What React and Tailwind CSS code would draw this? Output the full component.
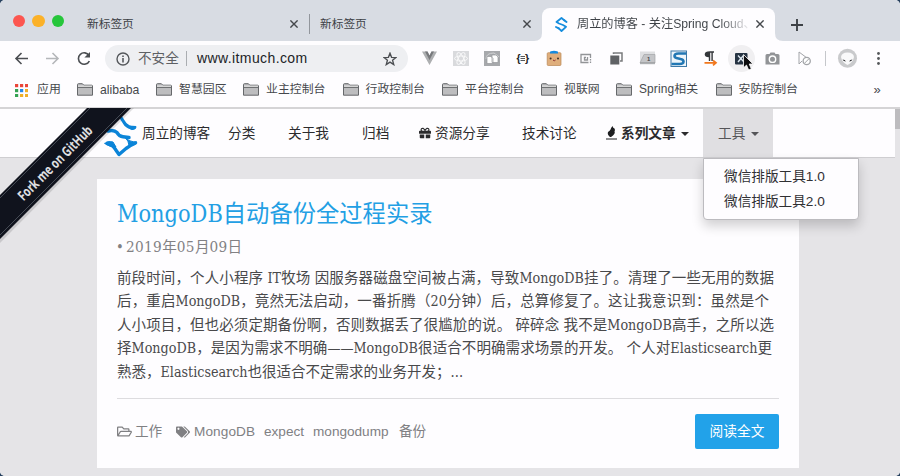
import React from "react";
import { FaGift, FaTags, FaRegFolderOpen } from "react-icons/fa";

const UI = "font-['Liberation_Sans','Noto_Sans_CJK_SC',sans-serif]";

function SiteMark() {
  return (
    <svg className="h-[48px] w-[36px] shrink-0" viewBox="103 109 36 48" fill="none" stroke="#0b84d8" strokeLinecap="round" strokeLinejoin="round">
      <path d="M120 116 Q123 121 125.500 124.500 Q129 128 134 127.500" strokeWidth="3.200" />
      <path d="M129 127.500 Q133 125.500 136 126.500 Q136 130 131.500 129.500 Z" fill="#0b84d8" strokeWidth="1" />
      <path d="M108 131 Q114 129.500 117 132.500 Q119 136.500 123 136.800 L129 137.500" strokeWidth="3.400" />
      <path d="M107 143.500 Q113 144.500 115.500 149.500 L119 154.500 L126 148.500 Q131 145 135.500 143" strokeWidth="3.400" />
      <path d="M105 143.500 Q107 140.500 113 142 L116 147 Q109 147 105 143.500 Z" fill="#0b84d8" strokeWidth="1" />
      <path d="M125 137.500 Q129 142 137 142 L135 144.500 L129 145.500 L128 141.500 Z" fill="#0b84d8" strokeWidth="1" />
    </svg>
  );
}

function TabLogo() {
  return (
    <svg className="h-[15px] w-[13px] shrink-0" viewBox="0 0 13 15" fill="none" stroke="#158ddd" strokeWidth="1.800" strokeLinejoin="round" strokeLinecap="round">
      <path d="M9.500 3.500 L6.500 1 L1.500 5 L4 6.500 L8 8 L11 9.800 L6.500 14 L3.500 11.200" />
      <path d="M9.300 3.300 L11.500 5M1 10 L3.700 11.400" strokeWidth="1.900" />
    </svg>
  );
}

function Close() {
  return (
    <svg className="h-2 w-2 shrink-0" viewBox="0 0 8 8" stroke="#45484c" strokeWidth="1.4">
      <path d="M.4 .4 7.6 7.6M7.6 .4 .4 7.6" />
    </svg>
  );
}

function Folder() {
  return (
    <svg className="h-[13px] w-4 shrink-0" viewBox="0 0 16 13" fill="#bdbdbf" stroke="#66686b" strokeWidth="1">
      <path d="M.5 12.2V1.6Q.5.7 1.4.7H5.4L6.8 2.2H14.6Q15.5 2.2 15.5 3V12.2Z" />
      <path d="M1 3.2H15" stroke="#f4f4f5" />
      <path d="M.5 4.4H15.5" />
    </svg>
  );
}

function Tabs() {
  return (
    <div className="flex h-[41px] bg-[#d8dce3] text-[11.7px] text-[#3d4146]">
      <div className="flex w-[87px] shrink-0 gap-[7px] pl-[12.5px] pt-[14.5px]">
        <span className="h-[12.5px] w-[12.5px] rounded-full bg-[#fc5650]" />
        <span className="h-[12.5px] w-[12.5px] rounded-full bg-[#fbb128]" />
        <span className="h-[12.5px] w-[12.5px] rounded-full bg-[#26c63b]" />
      </div>
      <div className="flex w-[222px] items-center pt-[7px]">
        <span className="w-[203px]">新标签页</span>
        <Close />
      </div>
      <div className="flex w-[223px] items-center pt-[7px]">
        <span className="mr-[10px] h-5 w-px bg-[#92969c]" />
        <span className="w-[203px]">新标签页</span>
        <Close />
      </div>
      <div className="flex w-[10px] items-end">
        <svg className="h-2 w-[10px]" viewBox="0 0 10 8"><path d="M10 0V8H2Q10 8 10 0Z" fill="#fefdff" /></svg>
      </div>
      <div className="mt-2 flex w-[233px] items-center rounded-t-[8px] bg-[#fefdff] pb-px pl-[13px]">
        <TabLogo />
        <span className="ml-[9px] w-[178px] shrink-0 whitespace-nowrap bg-gradient-to-r from-[#3d4146] from-80% to-transparent to-98% bg-clip-text text-[12.2px] text-transparent">周立的博客 - 关注Spring Cloud、</span>
        <span className="w-px shrink-0" />
        <Close />
      </div>
      <div className="flex items-end">
        <svg className="h-2 w-2" viewBox="0 0 8 8"><path d="M0 0V8H8Q0 8 0 0Z" fill="#fefdff" /></svg>
      </div>
      <div className="flex pl-2 pt-[18.5px]">
        <svg className="h-3 w-3" viewBox="0 0 12 12" stroke="#3d4146" strokeWidth="1.9"><path d="M6 0V12M0 6H12" /></svg>
      </div>
    </div>
  );
}

function Toolbar() {
  return (
    <div className="flex h-[35px] items-center text-[#3f4246]">
      <svg className="ml-[14px] h-4 w-[76px] shrink-0" viewBox="0 0 76 16" fill="none" strokeWidth="1.6">
        <path d="M14 7.500H2M7.500 2 2 7.500 7.500 13" stroke="#4b4e52" />
        <path d="M32 7.500H44M38.500 2 44 7.500 38.500 13" stroke="#b5b7ba" />
        <path d="M75 4.500A5.700 5.700 0 1 0 75.300 10" stroke="#4b4e52" />
        <path d="M76 1V6.600H70.400Z" fill="#4b4e52" />
      </svg>
      <div className="ml-[15px] flex h-[27px] w-[303px] items-center rounded-full bg-[#eeeff2] pl-[11px]">
        <svg className="h-[14px] w-[14px]" viewBox="0 0 14 14" fill="none" stroke="#55585c" strokeWidth="1.4">
          <circle cx="7" cy="7" r="6" /><path d="M7 6V10.5M7 3.5V5" strokeWidth="1.6" />
        </svg>
        <span className="ml-2 w-[48px] pt-px text-[13.6px] text-[#5d6064]">不安全</span>
        <span className="h-[15px] w-px bg-[#aaadb1]" />
        <span className="ml-[10px] w-[186px] text-[14px] tracking-[0.4px] text-[#222427]">www.itmuch.com</span>
        <svg className="h-[14px] w-[14px]" viewBox="0 0 24 24" fill="none" stroke="#4b4e52" strokeWidth="2.3">
          <path d="M12 2 14.700 9.100 22.300 9.500 16.400 14.200 18.400 21.600 12 17.400 5.600 21.600 7.600 14.200 1.700 9.500 9.300 9.100Z" />
        </svg>
      </div>
      <svg className="h-[35px] w-[485px] shrink-0" viewBox="408 41 485 35">
        <path d="M422 51.5H427.5L429.5 55.5 431.5 51.5H437L429.5 65Z" fill="#adafb1" />
        <path d="M425 51.5H427.5L429.5 55.5 431.5 51.5H434L429.5 60Z" fill="#77797c" />
        <g fill="none" stroke="#fafafb" strokeWidth=".9">
          <rect x="453" y="51" width="16" height="15" fill="#d9dadd" stroke="none" />
          <ellipse cx="461" cy="58.5" rx="6.5" ry="2.5" />
          <ellipse cx="461" cy="58.5" rx="6.5" ry="2.5" transform="rotate(60 461 58.5)" />
          <ellipse cx="461" cy="58.5" rx="6.5" ry="2.5" transform="rotate(120 461 58.5)" />
        </g>
        <rect x="484" y="51" width="16" height="15" fill="#a7a9ac" />
        <path d="M486 59Q486 53 494 53L499 57" fill="none" stroke="#d0d1d3" />
        <path d="M487 56.500H491L493 58.500V63.500H487ZM492 55H496L498 57V62.500H492Z" fill="#fff" stroke="#96989b" strokeWidth=".7" />
        <text x="516.5" y="62" fontSize="10.5" fontWeight="700" fill="#202225" fontFamily="Liberation Sans">{"{"}</text>
        <text x="525" y="62" fontSize="10.5" fontWeight="700" fill="#202225" fontFamily="Liberation Sans">{"}"}</text>
        <path d="M520.500 56.500H525M520.500 58.500H525M520.500 60.500H525" stroke="#56595c" />
        <path d="M550.5 53Q550.5 50.7 554 50.7 557.5 50.7 557.5 53Z" fill="#168ade" />
        <rect x="547.2" y="52.7" width="13.8" height="12.8" rx="1" fill="#dfae7c" stroke="#b98755" strokeWidth=".7" />
        <path d="M550 52.500H558" stroke="#168ade" strokeWidth="2" />
        <circle cx="550.6" cy="58.5" r="1" fill="#412e22" /><circle cx="558" cy="58.5" r="1" fill="#412e22" />
        <path d="M553 60Q554.3 61.5 555.6 60" fill="none" stroke="#8e3030" />
        <path d="M590.500 58V54.500H581V62.500H588.500M586 57.500H584.500V60H587.500V57M590.500 59V60.500M590.500 61.500V63" fill="none" stroke="#929497" strokeWidth="1.3" />
        <path d="M613.5 54V53H622V61H620" fill="none" stroke="#797b7d" strokeWidth="1.5" />
        <rect x="610.3" y="55.5" width="9" height="9" fill="#606265" />
        <rect x="640" y="51.5" width="15" height="13" fill="#dedfe1" /><path d="M640 63 644 54.5H655V63Z" fill="#c4c5c8" stroke="#a4a5a7" strokeWidth=".7" />
        <path d="M640 63H655" stroke="#929497" /><text x="647" y="61" fontSize="6" fontWeight="700" fill="#46484c" fontFamily="Liberation Sans">1</text>
        <rect x="671" y="51" width="15.5" height="15.5" fill="#eef5fa" stroke="#3d79a8" />
        <path d="M686 53.500H678.500Q674.500 53.500 674.500 56 674.500 58 678.500 58.500L680.500 59Q683.500 59.500 683.500 61.500 683.500 64 679.500 64H671.500" fill="none" stroke="#2277b4" strokeWidth="2.600" />
        <path d="M710 51.3H714V52.8H712.8V61H711.4V52.8H710.2V61H708.8V57.3Q704.7 57 704.7 54.2 704.7 51.3 710 51.3Z" fill="#34373b" />
        <path d="M704.5 62.8H715M713 60.3 716 62.8 713 65.3" fill="none" stroke="#f1771d" strokeWidth="1.7" />
        <circle cx="741.5" cy="58.5" r="13.5" fill="#f0eff1" />
        <rect x="735" y="53" width="12.5" height="11.5" rx="1" fill="#263342" />
        <path d="M738 55.5 744 62M743.5 55.5 738 62" stroke="#dbe6ef" strokeWidth="1.4" />
        <path d="M743.5 54.5V67.8L746.5 65.1 748.7 70 751.3 68.8 749.2 64H753Z" fill="#0d0d0f" stroke="#fff" strokeWidth=".8" />
        <path d="M767 54H769.5L770.5 52.5H774.5L775.5 54H778Q779.5 54 779.5 55.5V64.5H765.5V55.5Q765.5 54 767 54Z" fill="#929497" />
        <circle cx="772.5" cy="59.2" r="3.2" fill="#929497" stroke="#fff" strokeWidth="1.4" />
        <path d="M799 52V64L802 61M799 52 807 58" fill="none" stroke="#a2a4a8" />
        <circle cx="806.7" cy="61" r="3.6" fill="#fff" stroke="#a2a4a8" strokeWidth="1.3" /><path d="M804.4 63.4 809 58.7" stroke="#a2a4a8" />
        <path d="M825.5 51V66" stroke="#c5c7cb" />
        <circle cx="847.5" cy="58.3" r="9.5" fill="#c9cacc" />
        <path d="M841 57Q841.500 52.500 847.500 52.500 853.500 52.500 854 57 853 62.500 847.500 65 842 62.500 841 57Z" fill="#f9f9fa" />
        <path d="M842.500 59.500Q845 59.500 846 61.500 843.500 61.500 842.500 59.500ZM852.500 59.500Q850 59.500 849 61.500 851.500 61.500 852.500 59.500Z" fill="#252629" />
        <circle cx="878.5" cy="53.5" r="1.4" fill="#55585b" /><circle cx="878.5" cy="58.5" r="1.4" fill="#55585b" /><circle cx="878.5" cy="63.5" r="1.4" fill="#55585b" />
      </svg>
    </div>
  );
}

const appDots = ["#ea4639", "#ea4639", "#ea4639", "#34a353", "#2589e8", "#efaf27", "#34a353", "#efaf27", "#efaf27"];

function Bookmark({ label, className }) {
  return (
    <div className={"flex shrink-0 items-center gap-[7px] " + className}>
      <Folder /><span className="whitespace-nowrap">{label}</span>
    </div>
  );
}

function Bookmarks() {
  return (
    <div className="flex h-[31px] items-center pb-[3px] pl-[15px] text-[11.9px] text-[#45484c]">
      <svg className="h-[13px] w-[13px] shrink-0" viewBox="0 0 13 13">
        {appDots.map((c, i) => <rect key={i} x={(i % 3) * 5} y={Math.floor(i / 3) * 5} width="3.2" height="3.2" fill={c} />)}
      </svg>
      <span className="ml-[9px] w-[40px] shrink-0">应用</span>
      <Bookmark className="w-[79px] text-[12.2px]" label="alibaba" />
      <Bookmark className="w-[87px]" label="智慧园区" />
      <Bookmark className="w-[99.5px]" label="业主控制台" />
      <Bookmark className="w-[99.5px]" label="行政控制台" />
      <Bookmark className="w-[99px]" label="平台控制台" />
      <Bookmark className="w-[75px]" label="视联网" />
      <Bookmark className="w-[99.5px] tracking-[0.15px]" label="Spring相关" />
      <Bookmark className="w-[158px]" label="安防控制台" />
      <span className="text-[13px]">»</span>
    </div>
  );
}

function Caret() {
  return <span className="mt-[2px] h-0 w-0 border-x-4 border-t-4 border-x-transparent border-t-current" />;
}

function Flame() {
  return (
    <svg className="h-[14px] w-[11px] shrink-0" viewBox="0 0 11 14" fill="#1d1e20">
      <path d="M6.5 0Q7 2 8.500 2.500 9.500 4 8.500 5.500 9.500 7 7 9.500L5 11H4Q1 8.500 2 6 4 4.500 4.500 3.500 5 1.500 6.5 0Z" /><rect x="0" y="12.500" width="11" height="1" />
    </svg>
  );
}

function SiteNav() {
  return (
    <div className="flex h-[49px] w-[895px] items-center border-b border-[#cfced1] bg-[#fefdff] pl-[103px] text-[13.65px] text-[#2b2b2d]">
      <SiteMark />
      <span className="ml-[3px] w-[86px] shrink-0 pt-[2px]">周立的博客</span>
      <span className="w-[60px] shrink-0 pt-[2px]">分类</span>
      <span className="w-[74px] shrink-0 pt-[2px]">关于我</span>
      <span className="w-[57px] shrink-0 pt-[2px]">归档</span>
      <FaGift className="h-3 w-3 shrink-0" />
      <span className="ml-[4px] w-[87px] shrink-0 pt-[2px]">资源分享</span>
      <span className="w-[84px] shrink-0 pt-[2px]">技术讨论</span>
      <Flame />
      <span className="ml-1 w-[60px] shrink-0 pt-[2px] font-bold">系列文章</span>
      <Caret />
      <div className="relative ml-[14px] flex h-[48px] w-[70px] items-center gap-[6px] bg-[#e0dfe2] pl-[15px] text-[#555558]">
        <span className="shrink-0 pt-[2px]">工具</span><Caret />
        <div className="absolute left-0 top-[49px] z-20 h-[62px] w-[156px] rounded-b-[4px] border border-[#bcbbbf] bg-[#fefdff] pl-5 pt-[5px] text-[13.65px] leading-[25px] text-[#303033] shadow-[0_6px_12px_rgba(0,0,0,0.18)]">
          <p>微信排版工具1.0</p>
          <p>微信排版工具2.0</p>
        </div>
      </div>
    </div>
  );
}

function Ribbon() {
  return (
    <svg className="absolute left-0 top-[108px] z-10 h-[140px] w-[140px] overflow-visible" viewBox="0 108 140 140">
      <path d="M88 108H134L0 243V196Z" fill="#000" opacity=".12" />
      <path d="M87 108H131L0 239V195Z" fill="#10131d" />
      <path d="M90 108 0 198M127 108 0 235" stroke="#454a54" strokeWidth="1" />
      <text transform="translate(23.500 201.500) rotate(-45)" fontFamily="Open Sans" fontWeight="700" fontSize="14" textLength="99" lengthAdjust="spacingAndGlyphs" fill="#e0e0e2">Fork me on GitHub</text>
    </svg>
  );
}

/* Splits a string so Latin runs can be sized separately from the Han text. */
function Mixed({ text, latin }) {
  return text.split(/([A-Za-z0-9]+)/).map((part, i) => (i % 2 ? <span key={i} className={latin}>{part}</span> : part));
}

const lines = [
  ["前段时间，个人小程序 IT牧场 因服务器磁盘空间被占满，导致MongoDB挂了。清理了一些无用的数据", "w-[657px]"],
  ["后，重启MongoDB，竟然无法启动，一番折腾（20分钟）后，总算修复了。这让我意识到：虽然是个", "w-[652px]"],
  ["人小项目，但也必须定期备份啊，否则数据丢了很尴尬的说。 碎碎念 我不是MongoDB高手，之所以选", "w-[657px]"],
  ["择MongoDB，是因为需求不明确——MongoDB很适合不明确需求场景的开发。 个人对Elasticsearch更", "w-[655px]"],
  ["熟悉，Elasticsearch也很适合不定需求的业务开发；...", "w-[345px]"],
];

function Post() {
  return (
    <div className="ml-[97px] mt-[21px] h-[289px] w-[702px] bg-[#fefdff] px-5 pt-[17px] font-['DejaVu_Serif_Condensed','DejaVu_Serif','Noto_Sans_CJK_SC',serif]">
      <h1 className="h-[36px] whitespace-nowrap text-[23.3px] leading-[35px] text-[#239fe4]">
        <Mixed text="MongoDB自动备份全过程实录" latin="text-[23.3px]" />
      </h1>
      <p className="flex h-[35px] text-[14.6px] leading-[29px] text-[#828184]">
        <span className="-ml-px w-[10px]">•</span><span><Mixed text="2019年05月09日" latin="text-[15.2px] tracking-[0.35px]" /></span>
      </p>
      <div className="text-[14.5px] leading-[23.4px] text-[#49494b]">
        {lines.map(([t, w]) => (
          <p key={t} className={"whitespace-nowrap [text-align-last:justify] " + w}><Mixed text={t} latin="text-[14.2px]" /></p>
        ))}
      </div>
      <div className={"mt-[14px] flex h-[66px] w-[662px] items-center border-t border-[#dddcdf] text-[13.6px] text-[#808083] " + UI}>
        <FaRegFolderOpen className="h-[15px] w-[15px] shrink-0" />
        <span className="ml-[3px] w-[41px] pt-[2px]">工作</span>
        <FaTags className="h-[14px] w-[14px] shrink-0" />
        <span className="ml-[4px] w-[70px] pt-[2px] tracking-[0.1px]">MongoDB</span>
        <span className="w-[49px] pt-[2px]">expect</span>
        <span className="w-[86px] pt-[2px]">mongodump</span>
        <span className="pt-[2px]">备份</span>
        <button className="ml-auto h-[35px] w-[84px] rounded-[2px] bg-[#22a2e9] pt-px text-[13.7px] text-white">阅读全文</button>
      </div>
    </div>
  );
}

export default function App() {
  return (
    <div className="h-[476px] w-[900px] bg-[#27415f]">
      <div lang="zh-CN" className={"relative flex h-[476px] w-[900px] flex-col overflow-hidden rounded-[5px] bg-[#fefdff] leading-normal " + UI}>
        <Tabs />
        <Toolbar />
        <Bookmarks />
        <div className="h-[2px] bg-[#d5d4d6]" />
        <div className="flex flex-1 bg-[#e5e4e7]">
          <div className="w-[895px]">
            <SiteNav />
            <Post />
          </div>
          <div className="w-[5px]"><div className="h-5 bg-[#bdbcbf]" /></div>
        </div>
        <Ribbon />
      </div>
    </div>
  );
}
